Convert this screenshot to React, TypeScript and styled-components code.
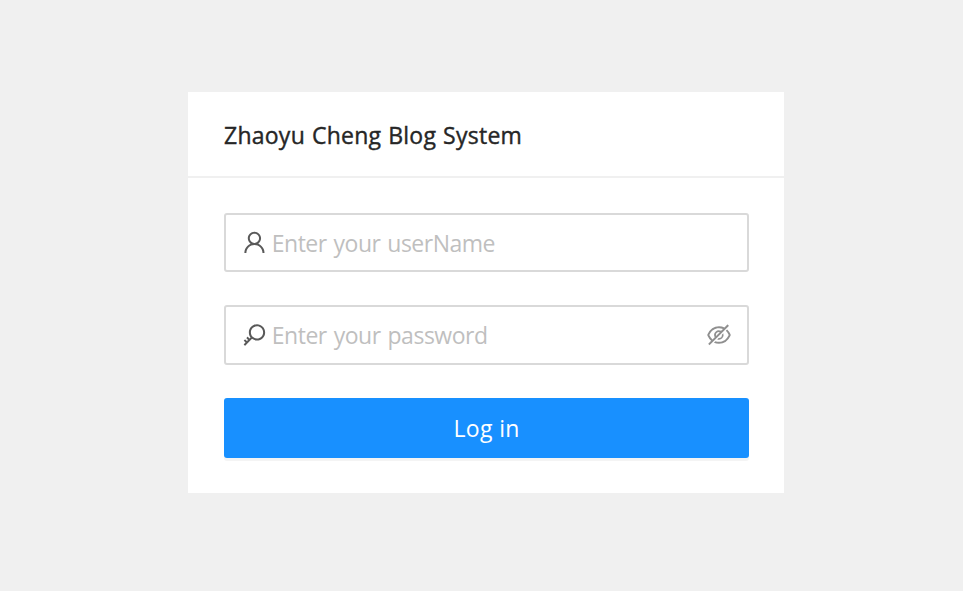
import React from 'react';
import styled, { createGlobalStyle } from 'styled-components';
import { AiOutlineUser, AiOutlineEyeInvisible } from 'react-icons/ai';

const GlobalStyle = createGlobalStyle`
  *, *::before, *::after { box-sizing: border-box; }
  body {
    margin: 0;
    background: #f0f0f0;
    font-family: "Open Sans", "Noto Sans", sans-serif;
  }
`;

const Page = styled.main`
  min-height: 591px;
  padding: 92px 178.7px 0 188.3px;
`;

const Card = styled.section`
  height: 400.7px;
  background: #fff;
`;

const CardHead = styled.header`
  height: 86px;
  padding: 2px 36px 0 35.7px;
  display: flex;
  align-items: center;
  border-bottom: 2px solid #f0f0f0;
`;

const Title = styled.h1`
  margin: 0;
  font-size: 23px;
  font-weight: 500;
  line-height: 36px;
  letter-spacing: 0.25px;
  word-spacing: 0.7px;
  color: #262626;
  -webkit-text-stroke: 0.4px #262626;
  white-space: nowrap;
`;

const Form = styled.form`
  padding: 35px 35.3px 0 36px;
  display: flex;
  flex-direction: column;
`;

const Field = styled.label<{ $height: number; $gap: number }>`
  height: ${(p) => p.$height}px;
  margin-bottom: ${(p) => p.$gap}px;
  padding: 0 16px 0 16.2px;
  display: flex;
  align-items: center;
  border: 2px solid #d9d9d9;
  border-radius: 3px;
  background: #fff;
`;

const FieldIcon = styled.span<{ $color: string }>`
  display: flex;
  flex: none;
  width: 24px;
  height: 24px;
  font-size: 24px;
  color: ${(p) => p.$color};
`;

const Input = styled.input<{ $spacing: string }>`
  flex: 1;
  min-width: 0;
  height: 36px;
  margin-left: 5.3px;
  padding: 0;
  border: 0;
  outline: 0;
  background: transparent;
  font: 400 23px/36px "Open Sans", "Noto Sans", sans-serif;
  letter-spacing: ${(p) => p.$spacing};
  word-spacing: 1.4px;
  color: #262626;
  &::placeholder { color: #bfbfbf; opacity: 1; }
`;

const Submit = styled.button`
  height: 60px;
  padding: 0;
  border: 0;
  border-radius: 3px;
  background: #1890ff;
  box-shadow: 0 3px 0 rgba(0, 0, 0, 0.043);
  color: #fff;
  font: 400 23px/36px "Open Sans", "Noto Sans", sans-serif;
  letter-spacing: 0.35px;
`;

const box = '64 64 896 896';

// Key with a round bow and two teeth near the tip.
const KeyIcon = () => (
  <svg viewBox="48 64 896 896" width="1em" height="1em" fill="currentColor" aria-hidden="true">
    <path d="M608 112c-167.9 0-304 136.1-304 304 0 70.3 23.9 135 63.9 186.5l-41.1 41.1-62.3-62.3a8.15 8.15 0 0 0-11.4 0l-39.8 39.8a8.15 8.15 0 0 0 0 11.4l62.3 62.3-44.9 44.9-62.3-62.3a8.15 8.15 0 0 0-11.4 0l-39.8 39.8a8.15 8.15 0 0 0 0 11.4l62.3 62.3-65.3 65.3a8.03 8.03 0 0 0 0 11.3l42.3 42.3c3.1 3.1 8.2 3.1 11.3 0l253.6-253.6A304.06 304.06 0 0 0 608 720c167.9 0 304-136.1 304-304S775.9 112 608 112zm161.2 465.2C726.2 620.3 668.9 644 608 644c-60.9 0-118.2-23.7-161.2-66.8-43.1-43-66.8-100.3-66.8-161.2 0-60.9 23.7-118.2 66.8-161.2 43-43.1 100.3-66.8 161.2-66.8 60.9 0 118.2 23.7 161.2 66.8 43.1 43 66.8 100.3 66.8 161.2 0 60.9-23.7 118.2-66.8 161.2z" />
  </svg>
);

export default function App() {
  return (
    <>
      <GlobalStyle />
      <Page>
        <Card>
          <CardHead>
            <Title>Zhaoyu Cheng Blog System</Title>
          </CardHead>
          <Form>
            <Field $height={59} $gap={33}>
              <FieldIcon $color="#595959"><AiOutlineUser viewBox="48 88 896 896" /></FieldIcon>
              <Input $spacing="-0.5px" type="text" placeholder="Enter your userName" />
            </Field>
            <Field $height={60} $gap={33}>
              <FieldIcon $color="#595959"><KeyIcon /></FieldIcon>
              <Input $spacing="-0.48px" type="password" placeholder="Enter your password" />
              <FieldIcon $color="#8f8f8f"><AiOutlineEyeInvisible viewBox={box} /></FieldIcon>
            </Field>
            <Submit type="button">Log in</Submit>
          </Form>
        </Card>
      </Page>
    </>
  );
}
